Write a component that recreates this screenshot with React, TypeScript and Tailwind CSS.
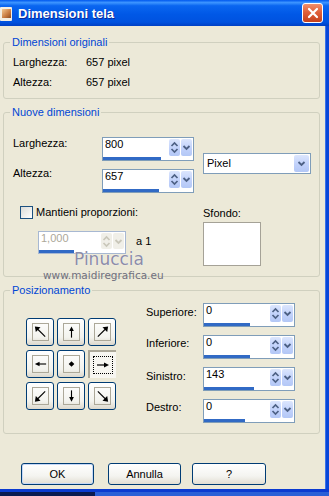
import React from "react";

type Dir = "nw" | "n" | "ne" | "w" | "c" | "e" | "sw" | "s" | "se";

function Arrow({ dir }: { dir: Dir }) {
  const s = { stroke: "#000", strokeWidth: 1.2, fill: "none" } as const;
  let el: React.ReactNode = null;
  switch (dir) {
    case "nw":
      el = (<><line x1="13" y1="13" x2="4" y2="4" {...s} /><polygon points="2,2 8,3 3,8" fill="#000" /></>);
      break;
    case "n":
      el = (<><line x1="8" y1="14" x2="8" y2="5" {...s} /><polygon points="8,2 5.5,7 10.5,7" fill="#000" /></>);
      break;
    case "ne":
      el = (<><line x1="3" y1="13" x2="12" y2="4" {...s} /><polygon points="14,2 8,3 13,8" fill="#000" /></>);
      break;
    case "w":
      el = (<><line x1="14" y1="8" x2="5" y2="8" {...s} /><polygon points="2,8 7,5.5 7,10.5" fill="#000" /></>);
      break;
    case "c":
      el = <polygon points="8,5 11,8 8,11 5,8" fill="#000" />;
      break;
    case "e":
      el = (<><line x1="2" y1="8" x2="11" y2="8" {...s} /><polygon points="14,8 9,5.5 9,10.5" fill="#000" /></>);
      break;
    case "sw":
      el = (<><line x1="13" y1="3" x2="4" y2="12" {...s} /><polygon points="2,14 3,8 8,13" fill="#000" /></>);
      break;
    case "s":
      el = (<><line x1="8" y1="2" x2="8" y2="11" {...s} /><polygon points="8,14 5.5,9 10.5,9" fill="#000" /></>);
      break;
    case "se":
      el = (<><line x1="3" y1="3" x2="12" y2="12" {...s} /><polygon points="14,14 8,13 13,8" fill="#000" /></>);
      break;
  }
  return (
    <svg width="16" height="16" viewBox="0 0 16 16">
      {el}
    </svg>
  );
}

function PosBtn({ dir, selected }: { dir: Dir; selected?: boolean }) {
  if (selected) {
    return (
      <div className="flex h-[28px] w-[28px] items-center justify-center border-t-2 border-l-2 border-[#aca899] bg-[#f7f6f1]">
        <div className="flex h-[18px] w-[20px] items-center justify-center border border-dotted border-black">
          <Arrow dir={dir} />
        </div>
      </div>
    );
  }
  return (
    <div className="flex h-[28px] w-[28px] items-center justify-center rounded-[3px] border border-[#003c74] bg-[linear-gradient(180deg,#ffffff_0%,#f3f3ee_70%,#dcd8cc_100%)]">
      <div className="flex h-[18px] w-[17px] items-center justify-center border border-[#aca899]">
        <Arrow dir={dir} />
      </div>
    </div>
  );
}

function SpinButtons({ disabled }: { disabled?: boolean }) {
  const bg = disabled
    ? "bg-[#f0efe8]"
    : "bg-[linear-gradient(180deg,#dce6fd_0%,#c3d3fb_50%,#b3c7f6_100%)]";
  const c = disabled ? "#c9c7ba" : "#4d6185";
  return (
    <div className="flex gap-px pt-px pr-px pb-px">
      <div className={`flex w-[11px] items-center justify-center rounded-[2px] ${bg}`}>
        <svg width="9" height="15" viewBox="0 0 9 15">
          <path d="M1.5 6 L4.5 3 L7.5 6" stroke={c} strokeWidth="1.7" fill="none" />
          <path d="M1.5 9 L4.5 12 L7.5 9" stroke={c} strokeWidth="1.7" fill="none" />
        </svg>
      </div>
      <div className={`flex w-[11px] items-center justify-center rounded-[2px] ${bg}`}>
        <svg width="9" height="9" viewBox="0 0 9 9">
          <path d="M1.5 3 L4.5 6 L7.5 3" stroke={c} strokeWidth="1.8" fill="none" />
        </svg>
      </div>
    </div>
  );
}

function Spin({
  value,
  bar,
  size,
  disabled,
}: {
  value: string;
  bar: number;
  size: string;
  disabled?: boolean;
}) {
  return (
    <div
      className={`flex shrink-0 flex-col border bg-white ${
        disabled ? "border-[#a7b8d2]" : "border-[#7f9db9]"
      } ${size}`}
    >
      <div className="flex min-h-0 flex-1">
        <span
          className={`flex-1 pl-[2px] leading-[13px] ${
            disabled ? "text-[#aca899]" : "text-black"
          }`}
        >
          {value}
        </span>
        <SpinButtons disabled={disabled} />
      </div>
      <div className="h-[3px] shrink-0 bg-[#316ac5]" style={{ width: bar }} />
    </div>
  );
}

function XPButton({ label, w, extra }: { label: string; w: string; extra?: string }) {
  return (
    <div
      className={`flex h-[22px] items-center justify-center rounded-[3px] border border-[#003c74] bg-[linear-gradient(180deg,#ffffff_0%,#f4f4f0_60%,#e2ded3_100%)] ${w} ${extra ?? ""}`}
    >
      <span className="leading-[13px]">{label}</span>
    </div>
  );
}

export default function App() {
  return (
    <div className="relative flex h-[496px] w-[329px] flex-col overflow-hidden bg-[#0a1a50] font-['Liberation_Sans',Arial,sans-serif] text-[11px] leading-[13px] text-black">
      {/* Title bar */}
      <div className="flex h-[26px] shrink-0 items-center justify-between bg-[linear-gradient(180deg,#0058ee_0%,#3d95ff_10%,#0a66f0_22%,#0058e6_55%,#0052df_85%,#0040c4_100%)] pr-[6px]">
        <div className="flex items-center">
          <div className="mt-[1px] flex h-[14px] w-[12px] items-center justify-center rounded-[1px] bg-[#f3eee3]">
            <div className="h-[9px] w-[9px] bg-[linear-gradient(135deg,#f5c890,#c6793f_60%,#8a4a20)]" />
          </div>
          <span className="ml-[6px] pt-[2px] text-[13px] font-bold leading-[16px] text-white [text-shadow:1px_1px_0_#0a2a9c]">
            Dimensioni tela
          </span>
        </div>
        <div className="flex h-[20px] w-[21px] items-center justify-center rounded-[3px] border border-white bg-[linear-gradient(180deg,#f08f6c_0%,#e0603a_45%,#c4401c_100%)]">
          <svg width="12" height="12" viewBox="0 0 12 12">
            <path d="M2 2 L10 10 M10 2 L2 10" stroke="#fff" strokeWidth="2.2" strokeLinecap="round" />
          </svg>
        </div>
      </div>

      {/* Middle */}
      <div className="flex h-[463px] shrink-0">
        <div className="flex w-[325px] flex-col bg-[#ece9d8]">
          {/* Group 1 */}
          <fieldset className="mt-[10px] ml-[3px] w-[317px] rounded-[3px] border border-[#d0d0bf] pb-[9px]">
            <legend className="ml-[6px] px-[2px] leading-[13px] text-[#0046d5]">
              Dimensioni originali
            </legend>
            <div className="flex flex-col gap-[7px] pt-[7px] pl-[9px]">
              <div className="flex">
                <span className="w-[73px]">Larghezza:</span>
                <span>657 pixel</span>
              </div>
              <div className="flex">
                <span className="w-[73px]">Altezza:</span>
                <span>657 pixel</span>
              </div>
            </div>
          </fieldset>

          {/* Group 2 */}
          <fieldset className="mt-[7px] ml-[3px] w-[317px] rounded-[3px] border border-[#d0d0bf]">
            <legend className="ml-[6px] px-[2px] leading-[13px] text-[#0046d5]">
              Nuove dimensioni
            </legend>
            <div className="flex pl-[9px]">
              <div className="flex w-[190px] flex-col pb-[22px]">
                <div className="mt-[18px] flex items-start">
                  <span className="w-[89px]">Larghezza:</span>
                  <Spin value="800" bar={58} size="h-[24px] w-[92px]" />
                </div>
                <div className="mt-[8px] flex items-start">
                  <span className="-mt-[2px] w-[89px]">Altezza:</span>
                  <Spin value="657" bar={56} size="h-[24px] w-[92px]" />
                </div>
                <div className="mt-[13px] ml-[7px] flex items-start gap-[3px]">
                  <div className="h-[13px] w-[13px] border border-[#1c5180] bg-[linear-gradient(135deg,#dcdcd7,#ffffff)]" />
                  <span>Mantieni proporzioni:</span>
                </div>
                <div className="mt-[12px] ml-[25px] flex items-start">
                  <Spin value="1,000" bar={35} size="h-[23px] w-[88px]" disabled />
                  <span className="mt-[4px] ml-[10px]">a 1</span>
                </div>
              </div>
              <div className="flex flex-col">
                <div className="mt-[34px] flex h-[21px] w-[108px] items-stretch border border-[#7f9db9] bg-white">
                  <span className="flex flex-1 items-center pl-[3px]">Pixel</span>
                  <div className="m-px flex w-[15px] items-center justify-center rounded-[2px] bg-[linear-gradient(180deg,#dce6fd_0%,#c3d3fb_50%,#b3c7f6_100%)]">
                    <svg width="9" height="9" viewBox="0 0 9 9">
                      <path d="M1.5 3 L4.5 6 L7.5 3" stroke="#4d6185" strokeWidth="1.8" fill="none" />
                    </svg>
                  </div>
                </div>
                <span className="mt-[33px]">Sfondo:</span>
                <div className="mt-[2px] h-[44px] w-[58px] border border-[#a5a297] bg-white" />
              </div>
            </div>
          </fieldset>

          {/* Group 3 */}
          <fieldset className="mt-[7px] ml-[3px] w-[317px] rounded-[3px] border border-[#d0d0bf] pb-[10px]">
            <legend className="ml-[6px] px-[2px] leading-[13px] text-[#0046d5]">
              Posizionamento
            </legend>
            <div className="flex items-start pl-[22px]">
              <div className="mt-[21px] grid grid-cols-[28px_28px_28px] gap-x-[3px] gap-y-[4px]">
                <PosBtn dir="nw" />
                <PosBtn dir="n" />
                <PosBtn dir="ne" />
                <PosBtn dir="w" />
                <PosBtn dir="c" />
                <PosBtn dir="e" selected />
                <PosBtn dir="sw" />
                <PosBtn dir="s" />
                <PosBtn dir="se" />
              </div>
              <div className="mt-[6px] ml-[30px] flex flex-col gap-[8px]">
                <div className="flex items-start">
                  <span className="mt-[3px] w-[57px]">Superiore:</span>
                  <Spin value="0" bar={46} size="h-[24px] w-[92px]" />
                </div>
                <div className="flex items-start">
                  <span className="mt-[2px] w-[57px]">Inferiore:</span>
                  <Spin value="0" bar={46} size="h-[24px] w-[92px]" />
                </div>
                <div className="flex items-start">
                  <span className="mt-[3px] w-[57px]">Sinistro:</span>
                  <Spin value="143" bar={50} size="h-[24px] w-[92px]" />
                </div>
                <div className="flex items-start">
                  <span className="mt-[2px] w-[57px]">Destro:</span>
                  <Spin value="0" bar={41} size="h-[24px] w-[92px]" />
                </div>
              </div>
            </div>
          </fieldset>

          {/* Buttons */}
          <div className="mt-[29px] flex pl-[21px]">
            <XPButton label="OK" w="w-[73px]" extra="shadow-[inset_0_0_0_1px_#c6d8f7]" />
            <XPButton label="Annulla" w="w-[73px]" extra="ml-[14px]" />
            <XPButton label="?" w="w-[74px]" extra="ml-[11px]" />
          </div>
        </div>
        <div className="flex w-[4px] bg-[#0846d8]">
          <div className="w-[1px] bg-[#3a72e8]" />
        </div>
      </div>

      {/* Bottom frame */}
      <div className="h-[3px] shrink-0 bg-[#0a3ad0]" />
      <div className="flex h-[4px] shrink-0">
        <div className="w-[95px] bg-[#0a1a50]" />
        <div className="flex-1 bg-[#2a5fd6]" />
      </div>

      {/* Watermark */}
      <span className="pointer-events-none absolute top-[249px] left-[74px] font-['DejaVu_Sans',sans-serif] text-[17px] leading-[20px] text-[#8c8ca8] [text-shadow:0_0_1px_#ffffff]">
        Pinuccia
      </span>
      <span className="pointer-events-none absolute top-[269px] left-[43px] font-['DejaVu_Sans',sans-serif] text-[10.5px] leading-[12px] text-[#70707e]">
        www.maidiregrafica.eu
      </span>
    </div>
  );
}
